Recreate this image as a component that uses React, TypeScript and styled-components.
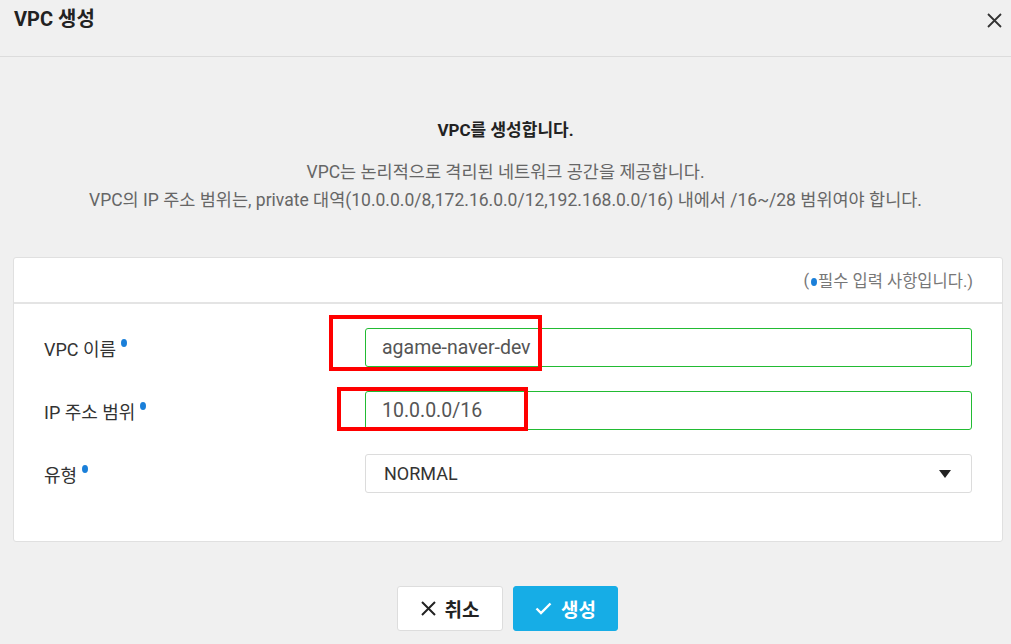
import React from "react";
import styled, { createGlobalStyle } from "styled-components";

const Global = createGlobalStyle`
  html, body { margin: 0; padding: 0; background: #f0f0f0; }
  body { font-family: Roboto, "Noto Sans CJK KR", sans-serif; color: #333; }
  * { box-sizing: border-box; }
`;

const Page = styled.div`
  width: 1011px;
  height: 644px;
  background: #f0f0f0;
  display: flex;
  flex-direction: column;
  overflow: hidden;
`;

const Header = styled.div`
  height: 57px;
  border-bottom: 1px solid #dcdcdc;
  display: flex;
  align-items: flex-start;
  justify-content: space-between;
  padding: 6px 9px 0 14px;
`;

const Title = styled.h1`
  margin: 0;
  font-size: 20px;
  font-weight: 700;
  color: #222;
  line-height: 26px;
`;

const CloseBtn = styled.button`
  border: 0;
  background: none;
  padding: 0;
  margin-top: 6px;
  width: 16px;
  height: 16px;
  display: flex;
  align-items: center;
  justify-content: center;
  cursor: pointer;
`;

const Intro = styled.div`
  display: flex;
  flex-direction: column;
  align-items: center;
  padding-top: 60px;
`;

const IntroTitle = styled.div`
  font-size: 17px;
  font-weight: 700;
  color: #222;
  line-height: 26px;
  margin-bottom: 15px;
`;

const IntroText = styled.div`
  font-size: 17.5px;
  color: #666;
  line-height: 28px;
  text-align: center;
`;

const Card = styled.div`
  margin: 43px 8px 0 13px;
  background: #fff;
  border: 1px solid #e0e0e0;
  border-radius: 3px;
  height: 285px;
  display: flex;
  flex-direction: column;
`;

const CardHead = styled.div`
  height: 46px;
  border-bottom: 2px solid #e4e4e4;
  display: flex;
  align-items: center;
  justify-content: flex-end;
  padding-right: 29px;
  font-size: 16.5px;
  color: #777;
`;

const Dot = styled.span<{ $head?: boolean }>`
  display: inline-block;
  width: 6px;
  height: 8px;
  border-radius: 50%;
  background: #1a7fd9;
  vertical-align: top;
  margin: ${(p) => (p.$head ? "3px 1px 0 2px" : "1px 0 0 5px")};
`;

const Rows = styled.div`
  display: flex;
  flex-direction: column;
  gap: 24px;
  padding-top: 24px;
`;

const Row = styled.div`
  display: flex;
  align-items: center;
  height: 39px;
`;

const Label = styled.div`
  width: 351px;
  padding-left: 30px;
  font-size: 18px;
  color: #333;
  line-height: 24px;
  margin-top: 4px;
`;

const FieldWrap = styled.div`
  position: relative;
  flex: 1;
  margin-right: 30px;
  height: 100%;
`;

const Input = styled.div<{ $valid?: boolean }>`
  height: 100%;
  border: 1px solid ${(p) => (p.$valid ? "#22bb33" : "#dcdcdc")};
  border-radius: 3px;
  background: #fff;
  display: flex;
  align-items: center;
  justify-content: space-between;
  padding: 0 20px 0 16px;
  font-size: 19.5px;
  color: #555;
`;

const SelectText = styled.span`
  color: #333;
  padding-left: 2px;
  font-size: 18px;
`;

const Highlight = styled.div<{ $l: number; $t: number; $w: number; $h: number }>`
  position: absolute;
  left: ${(p) => p.$l}px;
  top: ${(p) => p.$t}px;
  width: ${(p) => p.$w}px;
  height: ${(p) => p.$h}px;
  border: 4px solid #ff0000;
  pointer-events: none;
`;

const Footer = styled.div`
  display: flex;
  justify-content: center;
  gap: 10px;
  margin-top: 44px;
  padding-left: 4px;
`;

const Button = styled.button<{ $primary?: boolean }>`
  height: 45px;
  width: ${(p) => (p.$primary ? "105px" : "106px")};
  border-radius: 3px;
  border: 1px solid ${(p) => (p.$primary ? "#16ade6" : "#dddddd")};
  background: ${(p) => (p.$primary ? "#16ade6" : "#fff")};
  color: ${(p) => (p.$primary ? "#fff" : "#222")};
  font-family: Roboto, "Noto Sans CJK KR", sans-serif;
  font-size: 19px;
  font-weight: 700;
  display: flex;
  align-items: center;
  justify-content: center;
  gap: 9px;
  cursor: pointer;
`;

export default function App() {
  return (
    <Page>
      <Global />
      <Header>
        <Title>VPC 생성</Title>
        <CloseBtn aria-label="닫기">
          <svg width="15" height="15" viewBox="0 0 15 15">
            <path d="M1 1L14 14M14 1L1 14" stroke="#333" strokeWidth="1.8" />
          </svg>
        </CloseBtn>
      </Header>
      <Intro>
        <IntroTitle>VPC를 생성합니다.</IntroTitle>
        <IntroText>
          VPC는 논리적으로 격리된 네트워크 공간을 제공합니다.
          <br />
          VPC의 IP 주소 범위는, private 대역(10.0.0.0/8,172.16.0.0/12,192.168.0.0/16) 내에서 /16~/28 범위여야 합니다.
        </IntroText>
      </Intro>
      <Card>
        <CardHead>
          (<Dot $head />필수 입력 사항입니다.)
        </CardHead>
        <Rows>
          <Row>
            <Label>
              VPC 이름<Dot />
            </Label>
            <FieldWrap>
              <Input $valid>agame-naver-dev</Input>
              <Highlight $l={-36} $t={-13} $w={213} $h={56} />
            </FieldWrap>
          </Row>
          <Row>
            <Label>
              IP 주소 범위<Dot />
            </Label>
            <FieldWrap>
              <Input $valid>10.0.0.0/16</Input>
              <Highlight $l={-28} $t={-4} $w={191} $h={44} />
            </FieldWrap>
          </Row>
          <Row>
            <Label>
              유형<Dot />
            </Label>
            <FieldWrap>
              <Input>
                <SelectText>NORMAL</SelectText>
                <svg width="12" height="8" viewBox="0 0 12 8">
                  <path d="M0 0H12L6 8Z" fill="#222" />
                </svg>
              </Input>
            </FieldWrap>
          </Row>
        </Rows>
      </Card>
      <Footer>
        <Button>
          <svg width="15" height="15" viewBox="0 0 15 15">
            <path d="M1 1L14 14M14 1L1 14" stroke="#222" strokeWidth="2" />
          </svg>
          취소
        </Button>
        <Button $primary>
          <svg width="17" height="13" viewBox="0 0 17 13">
            <path d="M1.5 6.5L6 11L15.5 1.5" stroke="#fff" strokeWidth="2.4" fill="none" />
          </svg>
          생성
        </Button>
      </Footer>
    </Page>
  );
}
